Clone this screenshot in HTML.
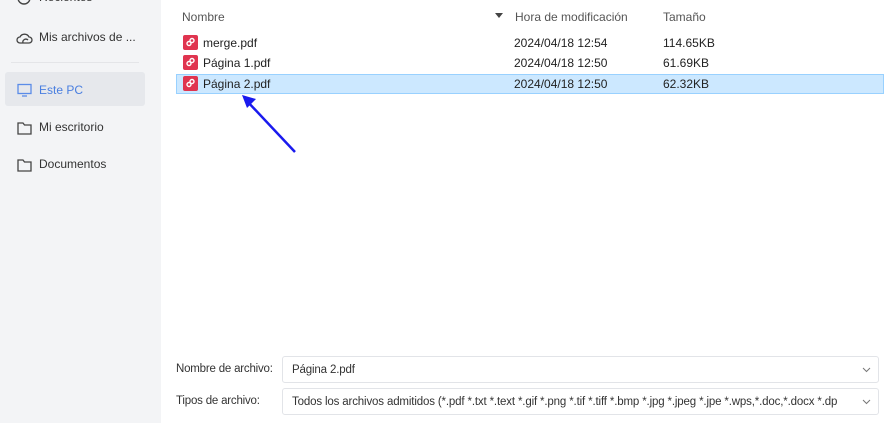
<!DOCTYPE html><html><head><style>
body{margin:0;width:886px;height:423px;overflow:hidden;background:#fff;font-family:"Liberation Sans",sans-serif;font-size:12px;color:#222;position:relative}
.sb{position:absolute;left:0;top:0;width:161px;height:423px;background:#f3f4f6}
.it{position:absolute;left:17px;color:#333;font-size:12px}
.it span{position:absolute;left:22px;top:0;white-space:nowrap}
.ab{position:absolute}
.hd{position:absolute;top:10px;color:#555;font-size:12px}
.row{position:absolute;left:176px;width:708px;height:20px}
.row .ic{position:absolute;left:7px;top:2px;width:15px;height:15px;background:#e0344f;border-radius:2px}
.row .ic svg{position:absolute;left:0;top:0}
.row .n{position:absolute;left:27px;top:3px}
.row .d{position:absolute;left:338px;top:3px}
.row .s{position:absolute;left:487px;top:3px}
.lbl{position:absolute;left:176px;color:#333;font-size:11.5px;letter-spacing:-0.2px}
.inp{position:absolute;left:282px;width:597px;height:27px;border:1px solid #e2e4e8;border-radius:3px;box-sizing:border-box;font-size:12px;color:#333}
.inp span{position:absolute;left:9px;top:7px;white-space:nowrap;width:560px;overflow:hidden;font-size:11.5px;letter-spacing:-0.15px}
.inp svg{position:absolute;right:7px;top:10px}
</style></head><body>
<div class="sb">
<div class="it" style="top:-8px"><svg width="16" height="16" style="position:absolute;left:0;top:0"><circle cx="7" cy="6" r="6" fill="none" stroke="#444" stroke-width="1.4"/></svg><span style="top:-2px">Recientes</span></div>
<div class="it" style="top:30px"><svg width="18" height="14" style="position:absolute;left:-1px;top:1px"><path d="M4 12a3 3 0 0 1 0-6a5 5 0 0 1 9 0a3 3 0 0 1 0 6z M7 12a3 3 0 0 1 5-3" fill="none" stroke="#444" stroke-width="1.3"/></svg><span>Mis archivos de ...</span></div>
<div class="ab" style="left:11px;top:62px;width:128px;height:1px;background:#e4e5e8"></div>
<div class="ab" style="left:5px;top:72px;width:140px;height:34px;background:#e6e8ec;border-radius:3px"></div>
<div class="it" style="top:83px;color:#4a7fe0"><svg width="16" height="14" style="position:absolute;left:0;top:0"><rect x="1" y="1.5" width="13" height="9" fill="none" stroke="#5b8ce8" stroke-width="1.3"/><path d="M5 13h5" stroke="#5b8ce8" stroke-width="1.3"/></svg><span>Este PC</span></div>
<div class="it" style="top:120px"><svg width="16" height="14" style="position:absolute;left:0;top:1px"><path d="M1 2h5l1.5 2H14v9H1z" fill="none" stroke="#444" stroke-width="1.3"/></svg><span>Mi escritorio</span></div>
<div class="it" style="top:157px"><svg width="16" height="14" style="position:absolute;left:0;top:1px"><path d="M1 2h5l1.5 2H14v9H1z" fill="none" stroke="#444" stroke-width="1.3"/></svg><span>Documentos</span></div>
</div>
<div class="hd" style="left:182px">Nombre</div>
<div class="ab" style="left:495px;top:13px;width:0;height:0;border-left:4px solid transparent;border-right:4px solid transparent;border-top:5px solid #444"></div>
<div class="hd" style="left:515px">Hora de modificación</div>
<div class="hd" style="left:663px">Tamaño</div>
<div class="row" style="top:33px"><div class="ic"><svg width="15" height="15"><circle cx="9" cy="5.5" r="2" fill="none" stroke="#fff" stroke-width="1.4"/><circle cx="6" cy="8.5" r="2" fill="none" stroke="#fff" stroke-width="1.4"/></svg></div><div class="n">merge.pdf</div><div class="d">2024/04/18 12:54</div><div class="s">114.65KB</div></div>
<div class="row" style="top:53px"><div class="ic"><svg width="15" height="15"><circle cx="9" cy="5.5" r="2" fill="none" stroke="#fff" stroke-width="1.4"/><circle cx="6" cy="8.5" r="2" fill="none" stroke="#fff" stroke-width="1.4"/></svg></div><div class="n">Página 1.pdf</div><div class="d">2024/04/18 12:50</div><div class="s">61.69KB</div></div>
<div class="row" style="top:74px;background:#cce8ff;box-shadow:inset 0 0 0 1px #99d1ff"><div class="ic"><svg width="15" height="15"><circle cx="9" cy="5.5" r="2" fill="none" stroke="#fff" stroke-width="1.4"/><circle cx="6" cy="8.5" r="2" fill="none" stroke="#fff" stroke-width="1.4"/></svg></div><div class="n">Página 2.pdf</div><div class="d">2024/04/18 12:50</div><div class="s">62.32KB</div></div>
<svg class="ab" style="left:230px;top:85px" width="80" height="75"><path d="M65 67L16 15" stroke="#1a1aee" stroke-width="2.5"/><path d="M12 10l14 4l-9 9z" fill="#1a1aee"/></svg>
<div class="lbl" style="top:363px">Nombre de archivo:</div>
<div class="inp" style="top:356px"><span>Página 2.pdf</span><svg width="9" height="6"><path d="M1 1l3.5 3.5L8 1" fill="none" stroke="#777" stroke-width="1"/></svg></div>
<div class="lbl" style="top:395px">Tipos de archivo:</div>
<div class="inp" style="top:388px"><span>Todos los archivos admitidos (*.pdf *.txt *.text *.gif *.png *.tif *.tiff *.bmp *.jpg *.jpeg *.jpe *.wps,*.doc,*.docx *.dp</span><svg width="9" height="6"><path d="M1 1l3.5 3.5L8 1" fill="none" stroke="#777" stroke-width="1"/></svg></div>
</body></html>
